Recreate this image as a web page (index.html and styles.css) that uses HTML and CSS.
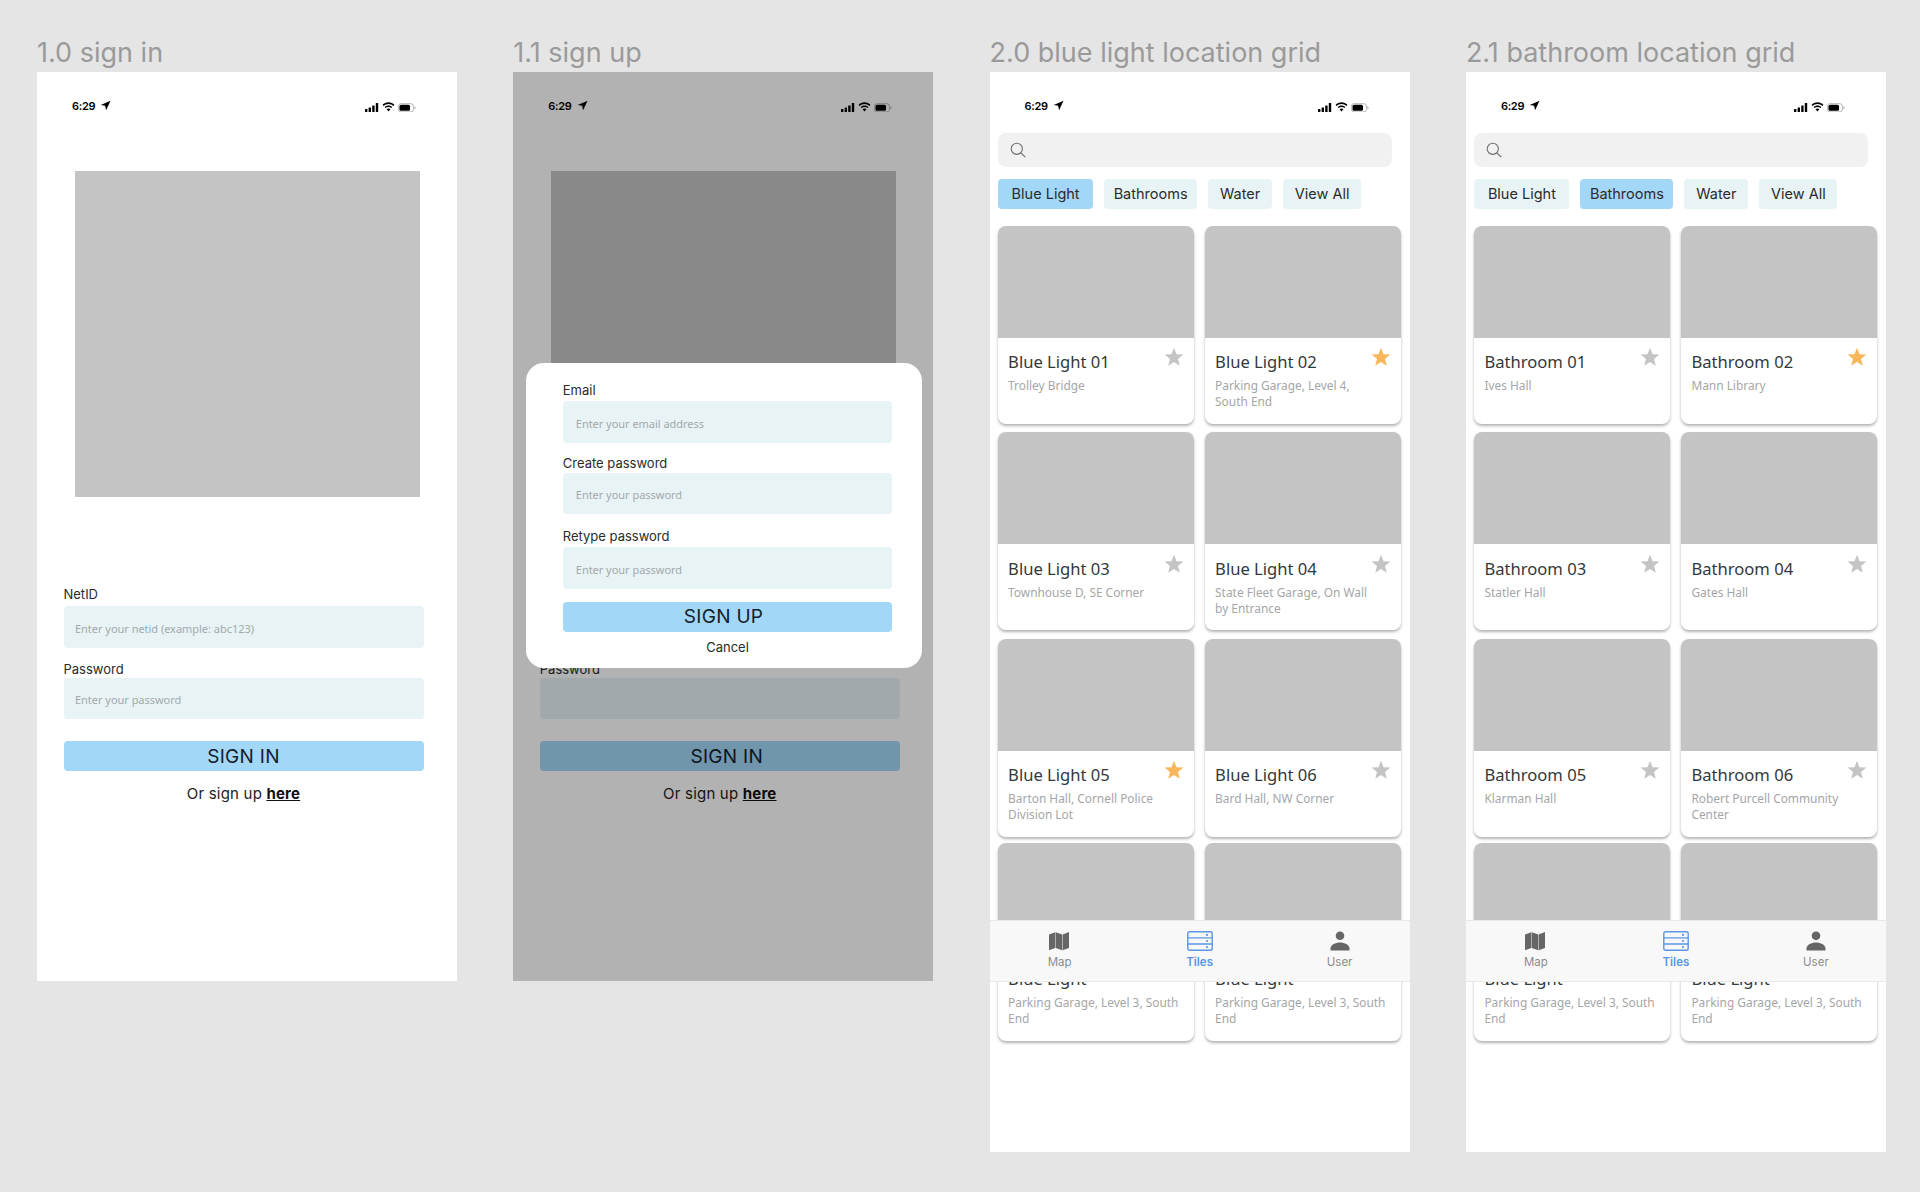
FILE: index.html
```html
<!DOCTYPE html>
<html lang="en">
<head>
<meta charset="utf-8">
<title>Wireframes</title>
<link rel="stylesheet" href="styles.css">
</head>
<body>
<svg class="sprite" xmlns="http://www.w3.org/2000/svg">
  <defs>
    <symbol id="i-arrow" viewBox="0 0 12 12"><path d="M11.5 0.8 L0.8 5.4 L5.6 6.2 L6.6 11.2 Z"/></symbol>
    <symbol id="i-signal" viewBox="0 0 14 9"><rect x="0" y="6" width="2.4" height="3" rx=".5"/><rect x="3.6" y="4.4" width="2.4" height="4.6" rx=".5"/><rect x="7.2" y="2.4" width="2.4" height="6.6" rx=".5"/><rect x="10.8" y="0" width="2.4" height="9" rx=".5"/></symbol>
    <symbol id="i-wifi" viewBox="0 0 13 10"><path d="M6.5 1.9c1.9 0 3.6.7 4.9 2l1-1.1C11 1.4 8.900.3 6.500.3S2 1.400.6 2.800l1 1.100c1.300-1.300 3-2 4.900-2zM6.500 5c1.100 0 2.100.4 2.900 1.100l1-1.100C9.400 4 8 3.400 6.500 3.400S3.600 4 2.600 5l1 1.100C4.400 5.400 5.400 5 6.500 5zM6.500 6.500c-.8 0-1.400.3-1.900.8l1.900 2.300 1.900-2.300c-.5-.5-1.100-.8-1.900-.8z"/></symbol>
    <symbol id="i-battery" viewBox="0 0 18 9"><rect x=".4" y=".4" width="15" height="8.200" rx="2.500" fill="none" stroke="#000" stroke-opacity=".35" stroke-width=".8"/><rect x="1.500" y="1.500" width="10.500" height="6" rx="1.500"/><path d="M16.500 3v3c.6-.2 1-.8 1-1.500s-.4-1.300-1-1.500z" fill-opacity=".4"/></symbol>
    <symbol id="i-star" viewBox="0 0 20 20"><path d="M10 .8 L12.500 7.200 L19.400 7.600 L14 12 L15.800 18.800 L10 15 L4.200 18.800 L6 12 L.6 7.600 L7.500 7.200 Z"/></symbol>
    <symbol id="i-search" viewBox="0 0 16 16"><circle cx="6.800" cy="6.800" r="5.600" fill="none" stroke="#6f6f6f" stroke-width="1.100"/><path d="M11 11 L15.300 15.200" stroke="#6f6f6f" stroke-width="1.100" fill="none"/></symbol>
    <symbol id="i-map" viewBox="0 0 20 19"><path d="M0 3 L6.300 .8 V16.500 L0 18.700 Z M6.800 .8 L13.200 3 V18.700 L6.800 16.500 Z M13.700 3 L20 .6 V16.400 L13.700 18.700 Z"/></symbol>
    <symbol id="i-tiles" viewBox="0 0 26 20"><rect x=".8" y=".8" width="24.400" height="18.400" rx="1.800" fill="none" stroke="#5a96e6" stroke-width="1.400"/><path d="M.8 6.900 H25.200 M.8 13 H25.200" stroke="#5a96e6" stroke-width="1.400" fill="none"/><circle cx="20" cy="3.900" r="1.100" fill="#5a96e6"/><circle cx="20" cy="10" r="1.100" fill="#5a96e6"/><circle cx="20" cy="16.100" r="1.100" fill="#5a96e6"/></symbol>
    <symbol id="i-user" viewBox="0 0 20 20"><circle cx="10" cy="4.800" r="4.300"/><path d="M.5 19.500 V17.500 C.5 13.800 5.500 11.500 10 11.500 S19.500 13.800 19.500 17.500 V19.500 Z"/></symbol>
  </defs>
</svg>

<main class="board">

  <section class="col">
    <h2 class="col-title">1.0 sign in</h2>
    <div class="phone phone-short">
      <div class="status">
        <div class="status-left"><span class="time">6:29</span><svg class="ic-arrow"><use href="#i-arrow"/></svg></div>
        <div class="status-right"><svg class="ic-signal"><use href="#i-signal"/></svg><svg class="ic-wifi"><use href="#i-wifi"/></svg><svg class="ic-battery"><use href="#i-battery"/></svg></div>
      </div>
      <div class="hero"></div>
      <form class="form">
        <div class="label label-first">NetID</div>
        <div class="input input-form">Enter your netid (example: abc123)</div>
        <div class="label label-next">Password</div>
        <div class="input input-form">Enter your password</div>
        <div class="btn btn-form">SIGN IN</div>
        <p class="alt">Or sign up <a class="alt-link" href="#">here</a></p>
      </form>
    </div>
  </section>

  <section class="col">
    <h2 class="col-title">1.1 sign up</h2>
    <div class="phone phone-short">
      <div class="status">
        <div class="status-left"><span class="time">6:29</span><svg class="ic-arrow"><use href="#i-arrow"/></svg></div>
        <div class="status-right"><svg class="ic-signal"><use href="#i-signal"/></svg><svg class="ic-wifi"><use href="#i-wifi"/></svg><svg class="ic-battery"><use href="#i-battery"/></svg></div>
      </div>
      <div class="hero"></div>
      <form class="form">
        <div class="label label-first">NetID</div>
        <div class="input"></div>
        <div class="label label-next">Password</div>
        <div class="input"></div>
        <div class="btn btn-form btn-shift">SIGN IN</div>
        <p class="alt">Or sign up <a class="alt-link" href="#">here</a></p>
      </form>
      <div class="scrim"></div>
      <div class="modal">
        <div class="label label-email">Email</div>
        <div class="input input-modal">Enter your email address</div>
        <div class="label label-create">Create password</div>
        <div class="input input-modal">Enter your password</div>
        <div class="label label-retype">Retype password</div>
        <div class="input input-modal">Enter your password</div>
        <div class="btn btn-modal">SIGN UP</div>
        <div class="cancel">Cancel</div>
      </div>
    </div>
  </section>

  <section class="col">
    <h2 class="col-title">2.0 blue light location grid</h2>
    <div class="phone phone-tall">
      <div class="status">
        <div class="status-left"><span class="time">6:29</span><svg class="ic-arrow"><use href="#i-arrow"/></svg></div>
        <div class="status-right"><svg class="ic-signal"><use href="#i-signal"/></svg><svg class="ic-wifi"><use href="#i-wifi"/></svg><svg class="ic-battery"><use href="#i-battery"/></svg></div>
      </div>
      <div class="search"><svg class="ic-search"><use href="#i-search"/></svg></div>
      <div class="chips">
        <div class="chip chip-on">Blue Light</div><div class="chip">Bathrooms</div><div class="chip">Water</div><div class="chip">View All</div>
      </div>
      <div class="cards">
        <article class="card"><div class="thumb"></div><div class="card-body"><div class="card-head"><h3 class="card-title">Blue Light 01</h3><svg class="star"><use href="#i-star"/></svg></div><p class="card-sub">Trolley Bridge</p></div></article>
        <article class="card"><div class="thumb"></div><div class="card-body"><div class="card-head"><h3 class="card-title">Blue Light 02</h3><svg class="star star-on"><use href="#i-star"/></svg></div><p class="card-sub">Parking Garage, Level 4,<br>South End</p></div></article>
        <article class="card"><div class="thumb"></div><div class="card-body"><div class="card-head"><h3 class="card-title">Blue Light 03</h3><svg class="star"><use href="#i-star"/></svg></div><p class="card-sub">Townhouse D, SE Corner</p></div></article>
        <article class="card"><div class="thumb"></div><div class="card-body"><div class="card-head"><h3 class="card-title">Blue Light 04</h3><svg class="star"><use href="#i-star"/></svg></div><p class="card-sub">State Fleet Garage, On Wall<br>by Entrance</p></div></article>
        <article class="card"><div class="thumb"></div><div class="card-body"><div class="card-head"><h3 class="card-title">Blue Light 05</h3><svg class="star star-on"><use href="#i-star"/></svg></div><p class="card-sub">Barton Hall, Cornell Police<br>Division Lot</p></div></article>
        <article class="card"><div class="thumb"></div><div class="card-body"><div class="card-head"><h3 class="card-title">Blue Light 06</h3><svg class="star"><use href="#i-star"/></svg></div><p class="card-sub">Bard Hall, NW Corner</p></div></article>
        <article class="card card-last"><div class="thumb"></div><div class="card-body"><div class="card-head"><h3 class="card-title">Blue Light</h3></div><p class="card-sub">Parking Garage, Level 3, South<br>End</p></div></article>
        <article class="card card-last"><div class="thumb"></div><div class="card-body"><div class="card-head"><h3 class="card-title">Blue Light</h3></div><p class="card-sub">Parking Garage, Level 3, South<br>End</p></div></article>
      </div>
      <nav class="tabbar">
        <div class="tab"><svg class="ic-map"><use href="#i-map"/></svg><span class="tab-label">Map</span></div>
        <div class="tab tab-on"><svg class="ic-tiles"><use href="#i-tiles"/></svg><span class="tab-label">Tiles</span></div>
        <div class="tab"><svg class="ic-user"><use href="#i-user"/></svg><span class="tab-label">User</span></div>
      </nav>
    </div>
  </section>

  <section class="col">
    <h2 class="col-title">2.1 bathroom location grid</h2>
    <div class="phone phone-tall">
      <div class="status">
        <div class="status-left"><span class="time">6:29</span><svg class="ic-arrow"><use href="#i-arrow"/></svg></div>
        <div class="status-right"><svg class="ic-signal"><use href="#i-signal"/></svg><svg class="ic-wifi"><use href="#i-wifi"/></svg><svg class="ic-battery"><use href="#i-battery"/></svg></div>
      </div>
      <div class="search"><svg class="ic-search"><use href="#i-search"/></svg></div>
      <div class="chips">
        <div class="chip">Blue Light</div><div class="chip chip-on">Bathrooms</div><div class="chip">Water</div><div class="chip">View All</div>
      </div>
      <div class="cards">
        <article class="card"><div class="thumb"></div><div class="card-body"><div class="card-head"><h3 class="card-title">Bathroom 01</h3><svg class="star"><use href="#i-star"/></svg></div><p class="card-sub">Ives Hall</p></div></article>
        <article class="card"><div class="thumb"></div><div class="card-body"><div class="card-head"><h3 class="card-title">Bathroom 02</h3><svg class="star star-on"><use href="#i-star"/></svg></div><p class="card-sub">Mann Library</p></div></article>
        <article class="card"><div class="thumb"></div><div class="card-body"><div class="card-head"><h3 class="card-title">Bathroom 03</h3><svg class="star"><use href="#i-star"/></svg></div><p class="card-sub">Statler Hall</p></div></article>
        <article class="card"><div class="thumb"></div><div class="card-body"><div class="card-head"><h3 class="card-title">Bathroom 04</h3><svg class="star"><use href="#i-star"/></svg></div><p class="card-sub">Gates Hall</p></div></article>
        <article class="card"><div class="thumb"></div><div class="card-body"><div class="card-head"><h3 class="card-title">Bathroom 05</h3><svg class="star"><use href="#i-star"/></svg></div><p class="card-sub">Klarman Hall</p></div></article>
        <article class="card"><div class="thumb"></div><div class="card-body"><div class="card-head"><h3 class="card-title">Bathroom 06</h3><svg class="star"><use href="#i-star"/></svg></div><p class="card-sub">Robert Purcell Community<br>Center</p></div></article>
        <article class="card card-last"><div class="thumb"></div><div class="card-body"><div class="card-head"><h3 class="card-title">Blue Light</h3></div><p class="card-sub">Parking Garage, Level 3, South<br>End</p></div></article>
        <article class="card card-last"><div class="thumb"></div><div class="card-body"><div class="card-head"><h3 class="card-title">Blue Light</h3></div><p class="card-sub">Parking Garage, Level 3, South<br>End</p></div></article>
      </div>
      <nav class="tabbar">
        <div class="tab"><svg class="ic-map"><use href="#i-map"/></svg><span class="tab-label">Map</span></div>
        <div class="tab tab-on"><svg class="ic-tiles"><use href="#i-tiles"/></svg><span class="tab-label">Tiles</span></div>
        <div class="tab"><svg class="ic-user"><use href="#i-user"/></svg><span class="tab-label">User</span></div>
      </nav>
    </div>
  </section>

</main>
</body>
</html>
```

FILE: styles.css
```css
* { box-sizing: border-box; }

html, body {
  margin: 0;
  height: 1192px;
  overflow: hidden;
}

body {
  background: #e5e5e5;
  color: #1c1c1c;
  font-family: "Inter", "Liberation Sans", sans-serif;
}

.sprite { display: none; }

.board {
  display: flex;
  align-items: flex-start;
  gap: 56.3px;
  padding-left: 37px;
}

.col { width: 420px; flex: none; }

.col-title {
  display: flex;
  align-items: flex-end;
  height: 72.300px;
  margin: 0;
  padding-bottom: 2px;
  font-size: 27px;
  line-height: 34px;
  font-weight: 400;
  color: #9a9a9a;
  white-space: nowrap;
}

.phone {
  position: relative;
  overflow: hidden;
  padding-top: 24px;
  background: #fff;
}
.phone-short { height: 909px; }
.phone-tall { height: 1080px; }

/* status bar */
.status {
  display: flex;
  justify-content: space-between;
  align-items: center;
  height: 20px;
  padding: 0 41px 0 35px;
}

.status-left, .status-right { display: flex; align-items: center; }
.time { font-size: 11px; font-weight: 600; color: #000; letter-spacing: -.3px; }
.ic-arrow { width: 11px; height: 11px; margin: -2px 0 0 5px; fill: #000; }
.status-right { gap: 3px; fill: #000; padding-top: 2px; }
.ic-signal { width: 14px; height: 9px; }
.ic-wifi { width: 13px; height: 10px; }
.ic-battery { width: 18px; height: 9.500px; }

/* sign in */
.hero {
  width: 345.5px;
  height: 326px;
  margin: 55px 0 0 37.7px;
  background: #c4c4c4;
}

.form { margin: 0 33.500px 0 26.500px; }

.label {
  height: 16px;
  font-size: 13px;
  line-height: 16px;
  color: #2b2b2b;
}
.label-first { margin: 89px 0 4px; }
.label-next { margin: 13px 0 1px; }

.input {
  display: flex;
  align-items: center;
  height: 41.5px;
  padding-left: 11.5px;
  border-radius: 4px;
  background: #e8f3f6;
  font-family: "Noto Sans", "Open Sans", sans-serif;
  font-size: 11px;
  letter-spacing: -.03px;
  color: #a3a9ab;
}
.input-form { padding-top: 2px; }

.btn {
  display: flex;
  align-items: center;
  justify-content: center;
  height: 30px;
  border-radius: 4px;
  background: #a3d7f7;
  font-size: 19px;
  font-weight: 400;
  color: #12202c;
  letter-spacing: .3px;
}
.btn-form { margin-top: 22px; }
.btn-shift { padding-left: 14px; }
.btn-modal { margin-top: 13px; padding-right: 8px; }

.alt {
  margin: 14px 0 0;
  font-size: 15px;
  line-height: 18px;
  letter-spacing: .2px;
  text-align: center;
  color: #1c1c1c;
}
.alt-link { color: #111; font-weight: 700; text-decoration: underline; }

/* sign up */
.scrim {
  position: absolute;
  inset: 0;
  background: rgba(0, 0, 0, .3);
}

.modal {
  position: absolute;
  left: 13px;
  top: 291px;
  width: 396px;
  height: 305px;
  padding: 19px 30px 0 36.500px;
  border-radius: 18px;
  background: #fff;
}
.label-email { margin-bottom: 3px; }
.label-create { margin: 12px 0 2px; }
.label-retype { margin: 13.500px 0 3.500px; }
.input-modal { padding-left: 13px; padding-top: 2px; }

.cancel {
  margin-top: 7.500px;
  font-size: 13px;
  line-height: 16px;
  text-align: center;
  color: #2b2b2b;
}

/* grid screens */
.search {
  display: flex;
  align-items: center;
  width: 394px;
  height: 34px;
  margin: 17px 0 0 8.500px;
  padding-left: 12px;
  border-radius: 8px;
  background: #f1f1f1;
}
.ic-search { width: 16px; height: 16px; }

.chips {
  display: grid;
  grid-template-columns: 95px 93px 64px 78px;
  column-gap: 11px;
  height: 30px;
  margin: 12px 0 0 8.500px;
}
.chip {
  display: flex;
  align-items: center;
  justify-content: center;
  padding-bottom: 1px;
  border-radius: 4px;
  background: #e8f3f6;
  font-size: 14.500px;
  color: #2b2b2b;
}
.chip-on { background: #a3d7f7; }

.cards {
  display: grid;
  grid-template-columns: 196px 196px;
  grid-auto-rows: 198px;
  column-gap: 11px;
  row-gap: 8.500px;
  margin: 16.300px 0 0 8.500px;
}

.card {
  height: 198px;
  border-radius: 8px;
  background: #fff;
  box-shadow: 0 2px 3px rgba(0, 0, 0, .3);
  overflow: hidden;
}
.card-last { margin-top: -2.500px; }

.thumb { height: 112px; background: #c4c4c4; }

.card-body { padding: 12.500px 10px 0; }

.card-head {
  display: flex;
  justify-content: space-between;
  align-items: flex-start;
  height: 24px;
}
.card-title {
  margin: 0;
  font-family: "Noto Sans", "Open Sans", sans-serif;
  font-size: 16.600px;
  line-height: 24px;
  font-weight: 400;
  color: #33383c;
  white-space: nowrap;
}
.card-sub {
  margin: 3px 0 0;
  font-family: "Noto Sans", "Open Sans", sans-serif;
  font-size: 11.900px;
  line-height: 16px;
  color: #a4a6a8;
  white-space: nowrap;
}

.star {
  flex: none;
  width: 20px;
  height: 20px;
  margin: -3px 0 0;
  fill: #c4c4c4;
}
.star-on { fill: #f9b75c; }

.tabbar {
  position: absolute;
  left: 0;
  right: 0;
  top: 848px;
  display: grid;
  grid-template-columns: repeat(3, 1fr);
  height: 62px;
  border-top: 1px solid #e9e9e9;
  border-bottom: 1px solid #e9e9e9;
  background: #f8f8f8;
}
.tab {
  display: flex;
  flex-direction: column;
  align-items: center;
  padding-top: 10px;
  fill: #666;
}
.ic-map { width: 20px; height: 20px; margin-right: 2px; }
.ic-tiles { width: 26px; height: 20px; }
.ic-user { width: 20px; height: 20px; }
.tab-label {
  margin-top: 4px;
  font-size: 11.500px;
  line-height: 14px;
  color: #8c8c8c;
}
.tab-on .tab-label { color: #5a96e6; font-weight: 600; }
```
